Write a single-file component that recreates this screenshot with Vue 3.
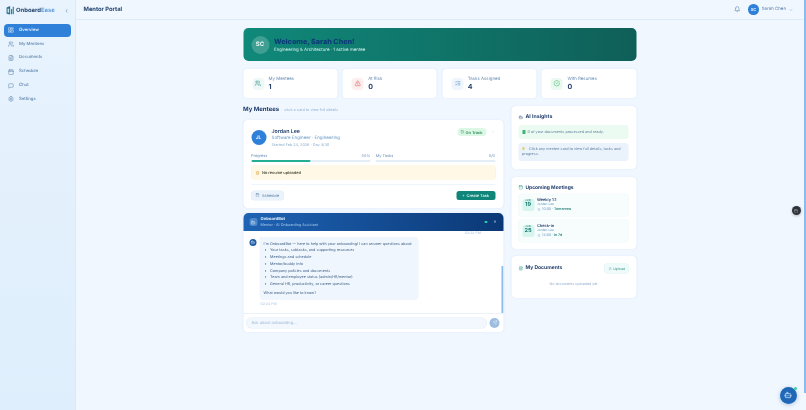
<template>
  <div class="app-shell">
    <aside class="sidebar">
      <div class="brand">
        <svg class="logo" viewBox="0 0 24 24">
          <path d="M4 5l9-4v22l-9-2z" fill="#2c6f96" />
          <path d="M6.5 8h4v10h-4z" fill="#bfe6e0" />
          <path d="M15 9h3v13h-3z" fill="#17907f" />
          <path d="M19.5 3h2.5v19h-2.5z" fill="#1d5f96" />
        </svg>
        <span class="brand-name">Onboard<em>Ease</em></span>
        <span class="collapse">‹</span>
      </div>
      <nav class="nav">
        <a v-for="item in navItems" :key="item.label" class="nav-item" :class="{ active: item.active }">
          <Icon :name="item.icon" class="nav-icon" />
          {{ item.label }}
        </a>
      </nav>
    </aside>

    <div class="main">
      <header class="topbar">
        <h1>Mentor Portal</h1>
        <div class="top-right">
          <Icon name="bell" class="bell" />
          <span class="top-avatar">SC</span>
          <span class="top-name">Sarah Chen</span>
          <Icon name="chevronDown" class="top-chevron" />
        </div>
      </header>

      <main class="content">
        <section class="hero">
          <span class="hero-avatar">SC</span>
          <div>
            <h2>Welcome, Sarah Chen!</h2>
            <p>Engineering &amp; Architecture · 1 active mentee</p>
          </div>
        </section>

        <section class="stats">
          <div v-for="stat in stats" :key="stat.label" class="stat">
            <span class="stat-icon" :class="stat.tone"><Icon :name="stat.icon" /></span>
            <div>
              <div class="stat-label">{{ stat.label }}</div>
              <div class="stat-value">{{ stat.value }}</div>
            </div>
          </div>
        </section>

        <section class="columns">
          <div class="left">
            <div class="section-head">
              <h3>My Mentees</h3>
              <span>click a card to view full details</span>
            </div>

            <article class="mentee card">
              <div class="mentee-top">
                <span class="mentee-avatar">JL</span>
                <div class="mentee-info">
                  <div class="mentee-name">Jordan Lee</div>
                  <div class="mentee-role">Software Engineer · Engineering</div>
                  <div class="mentee-date">Started Feb 24, 2026 · Day 3/30</div>
                </div>
                <span class="on-track"><Icon name="checkSquare" />On Track</span>
                <Icon name="chevronRight" class="mentee-chevron" />
              </div>
              <div class="progress-row">
                <div class="progress">
                  <div class="progress-labels"><span>Progress</span><span>50%</span></div>
                  <div class="track"><div class="fill" :style="{ width: '50%' }"></div></div>
                </div>
                <div class="progress">
                  <div class="progress-labels"><span>My Tasks</span><span>0/0</span></div>
                  <div class="track"></div>
                </div>
              </div>
              <div class="resume-alert"><Icon name="fileText" />No resume uploaded</div>
              <div class="mentee-actions">
                <button class="btn-schedule"><Icon name="calendar" />Schedule</button>
                <button class="btn-task">+&nbsp;&nbsp;Create Task</button>
              </div>
            </article>

            <article class="chat">
              <header class="chat-head">
                <span class="chat-bot-icon"><Icon name="bot" /></span>
                <div class="chat-title">
                  <strong>OnboardBot</strong>
                  <span>Mentor · AI Onboarding Assistant</span>
                </div>
                <i class="online"></i>
                <span class="chat-close">×</span>
              </header>
              <div class="chat-body">
                <div class="prev-time">02:24 PM</div>
                <div class="message">
                  <span class="msg-avatar"><Icon name="bot" /></span>
                  <div>
                    <div class="bubble">
                      <p>I'm OnboardBot — here to help with your onboarding! I can answer questions about:</p>
                      <ul>
                        <li v-for="topic in topics" :key="topic">{{ topic }}</li>
                      </ul>
                      <p class="ask">What would you like to know?</p>
                    </div>
                    <div class="msg-time">02:24 PM</div>
                  </div>
                </div>
                <span class="chat-scroll"></span>
              </div>
              <footer class="chat-input">
                <div class="input-box">Ask about onboarding...</div>
                <span class="send"><Icon name="send" /></span>
              </footer>
            </article>
          </div>

          <div class="right">
            <article class="card side-card insights">
              <h4><Icon name="bot" />AI Insights</h4>
              <div class="insight green"><i class="mini-check"></i>0 of your documents processed and ready.</div>
              <div class="insight blue"><b class="bulb"></b>Click any mentee card to view full details, tasks and progress.</div>
            </article>

            <article class="card side-card meetings">
              <h4><Icon name="calendar" />Upcoming Meetings</h4>
              <div v-for="meet in meetings" :key="meet.title" class="meeting">
                <div class="date"><span>JUN</span><strong>{{ meet.day }}</strong></div>
                <div>
                  <div class="meet-name">{{ meet.title }}</div>
                  <div class="meet-who">Jordan Lee</div>
                  <div class="meet-when"><Icon name="clock" />{{ meet.time }} · <b>{{ meet.when }}</b></div>
                </div>
              </div>
            </article>

            <article class="card side-card docs">
              <div class="docs-head">
                <h4><Icon name="fileText" />My Documents</h4>
                <button class="upload"><Icon name="upload" />Upload</button>
              </div>
              <p class="no-docs">No documents uploaded yet</p>
            </article>
          </div>
        </section>
      </main>
    </div>

    <div class="page-scroll"></div>
    <button class="fab-dark"><Icon name="calendar" /></button>
    <button class="fab-bot"><Icon name="bot" /><i></i></button>
  </div>
</template>

<script setup>
import { h } from 'vue'

const ICONS = {
  dashboard: ['M3 3h7v9H3z', 'M14 3h7v5h-7z', 'M14 12h7v9h-7z', 'M3 16h7v5H3z'],
  users: ['M16 21v-2a4 4 0 0 0-4-4H6a4 4 0 0 0-4 4v2', 'M5 7a4 4 0 1 0 8 0a4 4 0 1 0-8 0', 'M22 21v-2a4 4 0 0 0-3-3.87', 'M16 3.13a4 4 0 0 1 0 7.75'],
  fileText: ['M15 2H6a2 2 0 0 0-2 2v16a2 2 0 0 0 2 2h12a2 2 0 0 0 2-2V7Z', 'M14 2v4a2 2 0 0 0 2 2h4', 'M10 9H8', 'M16 13H8', 'M16 17H8'],
  calendar: ['M5 4h14a2 2 0 0 1 2 2v14a2 2 0 0 1-2 2H5a2 2 0 0 1-2-2V6a2 2 0 0 1 2-2z', 'M16 2v4', 'M8 2v4', 'M3 10h18'],
  chat: ['M21 15a2 2 0 0 1-2 2H7l-4 4V5a2 2 0 0 1 2-2h14a2 2 0 0 1 2 2z'],
  settings: ['M12.22 2h-.44a2 2 0 0 0-2 2v.18a2 2 0 0 1-1 1.73l-.43.25a2 2 0 0 1-2 0l-.15-.08a2 2 0 0 0-2.73.73l-.22.38a2 2 0 0 0 .73 2.73l.15.1a2 2 0 0 1 1 1.72v.51a2 2 0 0 1-1 1.74l-.15.09a2 2 0 0 0-.73 2.73l.22.38a2 2 0 0 0 2.73.73l.15-.08a2 2 0 0 1 2 0l.43.25a2 2 0 0 1 1 1.73V20a2 2 0 0 0 2 2h.44a2 2 0 0 0 2-2v-.18a2 2 0 0 1 1-1.73l.43-.25a2 2 0 0 1 2 0l.15.08a2 2 0 0 0 2.73-.73l.22-.39a2 2 0 0 0-.73-2.73l-.15-.08a2 2 0 0 1-1-1.74v-.5a2 2 0 0 1 1-1.74l.15-.09a2 2 0 0 0 .73-2.73l-.22-.38a2 2 0 0 0-2.73-.73l-.15.08a2 2 0 0 1-2 0l-.43-.25a2 2 0 0 1-1-1.73V4a2 2 0 0 0-2-2z', 'M9 12a3 3 0 1 0 6 0a3 3 0 1 0-6 0'],
  bell: ['M6 8a6 6 0 0 1 12 0c0 7 3 9 3 9H3s3-2 3-9', 'M10.3 21a1.94 1.94 0 0 0 3.4 0'],
  chevronDown: ['M6 9l6 6 6-6'],
  chevronRight: ['M9 18l6-6-6-6'],
  alert: ['M21.73 18l-8-14a2 2 0 0 0-3.48 0l-8 14A2 2 0 0 0 4 21h16a2 2 0 0 0 1.73-3', 'M12 9v4', 'M12 17h.01'],
  listChecks: ['M3 7l2 2 4-4', 'M3 17l2 2 4-4', 'M13 6h8', 'M13 12h8', 'M13 18h8'],
  checkCircle: ['M22 11.08V12a10 10 0 1 1-5.93-9.14', 'M22 4L12 14.01l-3-3'],
  checkSquare: ['M5 3h14a2 2 0 0 1 2 2v14a2 2 0 0 1-2 2H5a2 2 0 0 1-2-2V5a2 2 0 0 1 2-2z', 'M8 12l3 3 5-6'],
  bot: ['M12 8V4H8', 'M6 8h12a2 2 0 0 1 2 2v8a2 2 0 0 1-2 2H6a2 2 0 0 1-2-2v-8a2 2 0 0 1 2-2z', 'M2 14h2', 'M20 14h2', 'M15 13v2', 'M9 13v2'],
  send: ['M14.5 21.7a.5.5 0 0 0 .9 0l6.5-19a.5.5 0 0 0-.6-.6l-19 6.5a.5.5 0 0 0 0 .9l7.9 3.2a2 2 0 0 1 1.1 1.1z', 'M21.9 2.1L10.9 13.1'],
  upload: ['M21 15v4a2 2 0 0 1-2 2H5a2 2 0 0 1-2-2v-4', 'M17 8l-5-5-5 5', 'M12 3v12'],
  clock: ['M2 12a10 10 0 1 0 20 0a10 10 0 1 0-20 0', 'M12 6v6l4 2'],
}

const Icon = (props) =>
  h(
    'svg',
    { viewBox: '0 0 24 24', fill: 'none', stroke: 'currentColor', 'stroke-width': 2, 'stroke-linecap': 'round', 'stroke-linejoin': 'round' },
    ICONS[props.name].map((d) => h('path', { d }))
  )
Icon.props = ['name']

const navItems = [
  { label: 'Overview', icon: 'dashboard', active: true },
  { label: 'My Mentees', icon: 'users' },
  { label: 'Documents', icon: 'fileText' },
  { label: 'Schedule', icon: 'calendar' },
  { label: 'Chat', icon: 'chat' },
  { label: 'Settings', icon: 'settings' },
]

const stats = [
  { label: 'My Mentees', value: 1, icon: 'users', tone: 'teal' },
  { label: 'At Risk', value: 0, icon: 'alert', tone: 'red' },
  { label: 'Tasks Assigned', value: 4, icon: 'listChecks', tone: 'blue' },
  { label: 'With Resumes', value: 0, icon: 'checkCircle', tone: 'green' },
]

const topics = [
  'Your tasks, subtasks, and supporting resources',
  'Meetings and schedule',
  'Mentor/buddy info',
  'Company policies and documents',
  'Team and employee status (admin/HR/mentor)',
  'General HR, productivity, or career questions',
]

const meetings = [
  { title: 'Weekly 1:1', day: 19, time: '10:00', when: 'Tomorrow' },
  { title: 'Check-in', day: 25, time: '14:00', when: 'In 7d' },
]
</script>

<style>
html,
body {
  margin: 0;
  background: #f0f7ff;
}
</style>

<style scoped>
.app-shell {
  display: flex;
  width: 806px;
  height: 410px;
  overflow: hidden;
  background: #f0f7ff;
  font-family: Inter, 'Liberation Sans', sans-serif;
  color: #1e3a5f;
  text-rendering: geometricPrecision;
  filter: blur(0.35px);
}

svg {
  display: block;
  flex: none;
  width: 6px;
  height: 6px;
}

/* sidebar */
.sidebar {
  flex: none;
  width: 75px;
  background: linear-gradient(180deg, #e8f3fd, #deeefc);
  border-right: 1px solid #d8e9f9;
}

.brand {
  display: flex;
  align-items: center;
  height: 20px;
  padding: 0 7px 0 4.5px;
}

.logo {
  width: 9.5px;
  height: 10.5px;
  margin-right: 2px;
}

.brand-name {
  flex: 1;
  font-size: 5.9px;
  font-weight: 700;
  color: #24466e;
}

.brand-name em {
  font-style: normal;
  color: #5f9fdc;
}

.collapse {
  font-size: 7px;
  color: #7fa3c7;
}

.nav {
  display: flex;
  flex-direction: column;
  gap: 1.35px;
  padding: 4px 4px 0;
}

.nav-item {
  display: flex;
  align-items: center;
  gap: 5px;
  height: 12.5px;
  padding-left: 4px;
  border-radius: 4px;
  font-size: 4.3px;
  font-weight: 500;
  color: #5b81aa;
}

.nav-icon {
  width: 6px;
  height: 6px;
}

.nav-item.active {
  background: #2f80d8;
  color: #e8f3fd;
  font-weight: 600;
}

/* topbar */
.main {
  flex: 1;
  min-width: 0;
}

.topbar {
  display: flex;
  align-items: center;
  justify-content: space-between;
  height: 20px;
  padding: 0 11px 0 7.5px;
  border-bottom: 1px solid #dceafa;
  box-sizing: border-box;
}

h1 {
  margin: 0;
  font-size: 5.8px;
  font-weight: 700;
  color: #24466e;
}

.top-right {
  display: flex;
  align-items: center;
  font-size: 4.4px;
  color: #5b81aa;
}

.bell {
  width: 6.5px;
  height: 6.5px;
  margin-right: 8px;
}

.top-avatar {
  display: grid;
  place-items: center;
  width: 10.5px;
  height: 10.5px;
  margin-right: 3px;
  border-radius: 50%;
  background: #2f80d8;
  color: #dcecfb;
  font-size: 4px;
  font-weight: 700;
}

.top-chevron {
  width: 4px;
  height: 4px;
  margin-left: 3px;
}

/* content */
.content {
  width: 393px;
  margin: 8px auto 0;
  transform: translateX(-0.5px);
}

.hero {
  display: flex;
  align-items: center;
  gap: 5px;
  height: 33px;
  padding: 0 8px 0 8px;
  box-sizing: border-box;
  border-radius: 5px;
  background: linear-gradient(90deg, #10897a, #0f5f58);
}

.hero-avatar {
  display: grid;
  place-items: center;
  width: 18px;
  height: 18px;
  border-radius: 50%;
  background: #3e9f92;
  color: #e6f6f3;
  font-size: 6px;
  font-weight: 700;
}

.hero h2 {
  margin: 0 0 1.3px;
  font-size: 7.2px;
  line-height: 11px;
  font-weight: 800;
  color: #0b3a78;
}

.hero p {
  margin: 0;
  font-size: 4.4px;
  color: #cfeee8;
}

.stats {
  display: grid;
  grid-template-columns: repeat(4, 1fr);
  gap: 5.5px;
  margin-top: 8px;
}

.stat {
  display: flex;
  align-items: center;
  gap: 4.5px;
  height: 29px;
  padding-left: 9px;
  box-sizing: border-box;
  background: #fff;
  border-radius: 3.5px;
  box-shadow: 0 0 2px #dcebfa;
}

.stat-icon {
  display: grid;
  place-items: center;
  width: 12px;
  height: 12px;
  border-radius: 4px;
}

.stat-icon svg {
  width: 6.5px;
  height: 6.5px;
}

.stat-icon.teal {
  background: #eef9f7;
  color: #2f8f83;
}

.stat-icon.red {
  background: #fdeeee;
  color: #e0555a;
}

.stat-icon.blue {
  background: #eef5fc;
  color: #4c86bd;
}

.stat-icon.green {
  background: #e9f9ef;
  color: #39b36b;
}

.stat-label {
  font-size: 4.4px;
  line-height: 6px;
  color: #6b8fb5;
}

.stat-value {
  font-size: 7px;
  line-height: 7.5px;
  font-weight: 700;
  color: #24406e;
}

.columns {
  display: flex;
  gap: 8px;
}

.left {
  width: 260px;
  flex: none;
}

.right {
  flex: 1;
  display: flex;
  flex-direction: column;
  gap: 7.5px;
  margin-top: 8px;
}

.section-head {
  display: flex;
  align-items: center;
  gap: 5px;
  height: 22px;
}

.section-head h3 {
  margin: 0;
  font-size: 6px;
  font-weight: 700;
  color: #24406e;
}

.section-head span {
  font-size: 3.8px;
  color: #93b2d2;
}

.card {
  background: #fff;
  border-radius: 4.5px;
  box-shadow: 0 0 2px #dcebfa;
}

/* mentee */
.mentee {
  height: 88px;
  padding: 0 8px;
  box-sizing: border-box;
}

.mentee-top {
  display: flex;
  align-items: flex-start;
  gap: 5.5px;
  height: 33px;
  padding-top: 8.5px;
  box-sizing: border-box;
}

.mentee-avatar {
  display: grid;
  place-items: center;
  width: 15px;
  height: 15px;
  margin-top: 1.5px;
  border-radius: 50%;
  background: #2f80d8;
  color: #e8f3fd;
  font-size: 4.8px;
  font-weight: 700;
}

.mentee-info {
  flex: 1;
}

.mentee-name {
  font-size: 5.3px;
  line-height: 7px;
  font-weight: 600;
  color: #24406e;
}

.mentee-role {
  font-size: 4.5px;
  line-height: 6.5px;
  color: #6b9ac9;
}

.mentee-date {
  font-size: 3.8px;
  line-height: 5.5px;
  color: #8fadcc;
}

.on-track {
  display: flex;
  align-items: center;
  gap: 1.5px;
  height: 8px;
  margin-top: -0.5px;
  padding: 0 3.5px 0 3px;
  border-radius: 4px;
  background: #dcf7e5;
  color: #248a55;
  font-size: 3.9px;
  font-weight: 600;
}

.on-track svg {
  width: 3.6px;
  height: 3.6px;
}

.mentee-chevron {
  width: 3.5px;
  height: 3.5px;
  margin-top: 1.5px;
  color: #9ab6d2;
}

.progress-row {
  display: flex;
  gap: 5.5px;
}

.progress {
  flex: 1;
}

.progress-labels {
  display: flex;
  justify-content: space-between;
  font-size: 3.9px;
  line-height: 5px;
  color: #6b8fb5;
}

.track {
  height: 2px;
  margin-top: 1.5px;
  border-radius: 1px;
  background: #e3eef9;
}

.fill {
  height: 100%;
  border-radius: 1px;
  background: #23ae95;
}

.resume-alert {
  display: flex;
  align-items: center;
  gap: 2.5px;
  height: 13px;
  margin-top: 4.5px;
  padding-left: 4.5px;
  border-radius: 3px;
  background: #fff8e6;
  box-shadow: 0 0 0 0.5px #fdf1d2;
  color: #4a4a3a;
  font-size: 3.9px;
  font-weight: 600;
}

.resume-alert svg {
  width: 4px;
  height: 4px;
  color: #d99a2b;
}

.mentee-actions {
  display: flex;
  align-items: center;
  justify-content: space-between;
  margin-top: 5px;
  padding-top: 5.5px;
  border-top: 0.5px solid #edf4fb;
}

button {
  font-family: inherit;
  border: 0;
  padding: 0;
  text-rendering: geometricPrecision;
}

.btn-schedule {
  display: flex;
  align-items: center;
  gap: 2.5px;
  height: 9.5px;
  padding: 0 4.5px;
  border-radius: 3px;
  background: #eaf3fc;
  box-shadow: 0 0 0 0.5px #e0edf9;
  color: #5b81aa;
  font-size: 3.9px;
}

.btn-schedule svg {
  width: 4px;
  height: 4px;
}

.btn-task {
  height: 9px;
  padding: 0 6px;
  border-radius: 2.5px;
  background: #10857a;
  color: #e0f5f2;
  font-size: 3.9px;
  font-weight: 600;
}

/* chat */
.chat {
  height: 119px;
  margin-top: 5px;
  background: #fff;
  border-radius: 5px 5px 4px 4px;
  box-shadow: 0 0 2px #dcebfa;
}

.chat-head {
  display: flex;
  align-items: center;
  gap: 3.5px;
  height: 18px;
  padding: 0 6.5px 0 6px;
  border-radius: 5px 5px 0 0;
  background: linear-gradient(90deg, #1e63b4, #0b3875);
  color: #dcecfb;
}

.chat-bot-icon {
  display: grid;
  place-items: center;
  width: 8.5px;
  height: 8.5px;
  border-radius: 2.5px;
  background: #4d86c7;
}

.chat-bot-icon svg {
  width: 5px;
  height: 5px;
}

.chat-title {
  flex: 1;
  display: flex;
  flex-direction: column;
  line-height: 5.2px;
  margin-left: -0.5px;
}

.chat-title strong {
  font-size: 4.2px;
  font-weight: 700;
}

.chat-title span {
  font-size: 3.7px;
  color: #a8c8ea;
}

.online {
  width: 2.5px;
  height: 2.5px;
  margin-right: 2.5px;
  border-radius: 50%;
  background: #2dd4a8;
}

.chat-close {
  font-size: 5px;
  line-height: 5px;
  color: #b8d2ee;
}

.chat-body {
  position: relative;
  height: 83px;
  padding: 0 6px;
  box-sizing: border-box;
  border-bottom: 0.5px solid #eaf2fa;
  overflow: hidden;
}

.prev-time {
  height: 6px;
  padding-right: 16px;
  text-align: right;
  font-size: 3.5px;
  line-height: 4px;
  color: #a9c5e2;
}

.message {
  display: flex;
  gap: 3px;
}

.msg-avatar {
  display: grid;
  place-items: center;
  flex: none;
  width: 7.5px;
  height: 7.5px;
  margin-top: 1.5px;
  border-radius: 50%;
  background: #1e5ba5;
  color: #dcecfb;
}

.msg-avatar svg {
  width: 4.5px;
  height: 4.5px;
}

.bubble {
  width: 158.5px;
  height: 62.5px;
  padding: 3.5px 4px 0;
  box-sizing: border-box;
  border-radius: 1px 4px 4px 4px;
  background: #eff6fd;
  color: #3f5f85;
  font-size: 3.75px;
  line-height: 6.75px;
}

.bubble p {
  margin: 0;
  white-space: nowrap;
}

.bubble ul {
  margin: 0;
  padding: 0 0 0 1px;
  list-style: none;
}

.bubble li {
  display: flex;
  gap: 3.5px;
}

.bubble li::before {
  content: '•';
}

.bubble .ask {
  margin-top: 2.5px;
}

.msg-time {
  margin: 2.5px 0 0 1px;
  font-size: 3.5px;
  color: #a9c5e2;
}

.chat-scroll {
  position: absolute;
  top: 35px;
  right: 0;
  width: 1.5px;
  height: 48px;
  background: #8bbcef;
}

.chat-input {
  display: flex;
  align-items: center;
  gap: 3px;
  padding: 3.5px 3.5px 0;
}

.input-box {
  flex: 1;
  height: 10.5px;
  padding-left: 5px;
  border-radius: 5px;
  background: #f3f8fe;
  box-shadow: 0 0 0 0.5px #dfecf9;
  color: #9db8d4;
  font-size: 4px;
  line-height: 10.5px;
}

.send {
  display: grid;
  place-items: center;
  width: 10px;
  height: 10px;
  border-radius: 50%;
  background: #9dbde0;
  color: #e8f3fd;
}

.send svg {
  width: 5px;
  height: 5px;
}

/* right column */
.side-card {
  padding: 8px 7.5px;
  box-sizing: border-box;
}

.insights {
  height: 63px;
}

.meetings {
  height: 72px;
}

.side-card h4 {
  display: flex;
  align-items: center;
  gap: 2.5px;
  margin: 0;
  font-size: 5.2px;
  line-height: 7px;
  font-weight: 700;
  color: #24406e;
}

.side-card h4 svg {
  width: 4.5px;
  height: 4.5px;
  color: #4d6c8f;
}

.insight {
  padding: 0 3.5px;
  border-radius: 3.5px;
  font-size: 3.75px;
  line-height: 5px;
  color: #5f7f9f;
}

.insight.green {
  display: flex;
  align-items: center;
  gap: 2px;
  height: 13.5px;
  margin-top: 4px;
  background: #ecfbf1;
  box-sizing: border-box;
}

.mini-check {
  width: 3.5px;
  height: 3.5px;
  border-radius: 0.5px;
  background: #3eb576;
}

.insight.blue {
  height: 18.5px;
  margin-top: 4px;
  padding-top: 3.5px;
  box-sizing: border-box;
  background: #eaf2fc;
}

.bulb {
  display: inline-block;
  width: 2.5px;
  height: 3.5px;
  margin-right: 4.5px;
  border-radius: 1px;
  background: #f0c24a;
}

.meetings h4 {
  font-size: 4.9px;
  line-height: 6px;
  margin-bottom: 3px;
}

.meetings h4 svg {
  color: #2f9a8c;
}

.meeting {
  display: flex;
  align-items: center;
  gap: 3px;
  height: 22px;
  margin-bottom: 4px;
  padding: 0 3.5px;
  box-sizing: border-box;
  border-radius: 3.5px;
  background: #f7fcfc;
  box-shadow: 0 0 0 0.5px #f0f9f9;
}

.date {
  display: flex;
  flex-direction: column;
  align-items: center;
  flex: none;
  width: 12px;
  height: 12px;
  border-radius: 2.5px;
  background: #d6f5ef;
  color: #1c7f73;
}

.date span {
  font-size: 2.6px;
  line-height: 3.8px;
}

.date strong {
  font-size: 5.6px;
  line-height: 6px;
}

.meet-name {
  font-size: 3.9px;
  line-height: 5px;
  font-weight: 600;
  color: #24406e;
}

.meet-who {
  font-size: 3.2px;
  line-height: 4.5px;
  color: #6b9ac9;
}

.meet-when {
  display: flex;
  align-items: center;
  gap: 1px;
  font-size: 3.5px;
  line-height: 5.5px;
  color: #6b9ac9;
}

.meet-when svg {
  width: 3px;
  height: 3px;
  margin-right: 1px;
}

.meet-when b {
  color: #1c7f73;
  font-weight: 600;
}

.docs {
  height: 42px;
  padding-top: 8px;
}

.docs-head {
  display: flex;
  align-items: center;
  justify-content: space-between;
  height: 9px;
}

.docs-head h4 {
  font-size: 5px;
}

.docs-head h4 svg {
  color: #2f9a8c;
}

.upload {
  display: flex;
  align-items: center;
  gap: 1.5px;
  height: 9px;
  padding: 0 3.5px;
  border-radius: 2.5px;
  background: #effafa;
  box-shadow: 0 0 0 0.5px #dcf3ef;
  color: #3a9588;
  font-size: 3.5px;
}

.upload svg {
  width: 3.5px;
  height: 3.5px;
}

.no-docs {
  margin: 9px 0 0;
  text-align: center;
  font-size: 3.6px;
  color: #8fadcc;
}

/* page overlays */
.page-scroll {
  flex: none;
  width: 2px;
  height: 393px;
  background: #8bbcef;
}

.fab-dark {
  position: fixed;
  left: 791.5px;
  top: 206px;
  display: grid;
  place-items: center;
  width: 9px;
  height: 9px;
  border-radius: 50%;
  background: #2f3338;
  color: #a8adb3;
  box-shadow: 0 1px 3px rgba(0, 0, 0, 0.25);
}

.fab-dark svg {
  width: 4px;
  height: 4px;
}

.fab-bot {
  position: fixed;
  left: 779.5px;
  top: 386.5px;
  display: grid;
  place-items: center;
  width: 17px;
  height: 17px;
  border-radius: 50%;
  background: #1f68b8;
  color: #dcecfb;
  box-shadow: 0 1px 4px rgba(30, 90, 160, 0.3);
}

.fab-bot svg {
  width: 8px;
  height: 8px;
}

.fab-bot i {
  position: absolute;
  top: 0;
  right: 0;
  width: 3px;
  height: 3px;
  border-radius: 50%;
  background: #34d399;
}
</style>
